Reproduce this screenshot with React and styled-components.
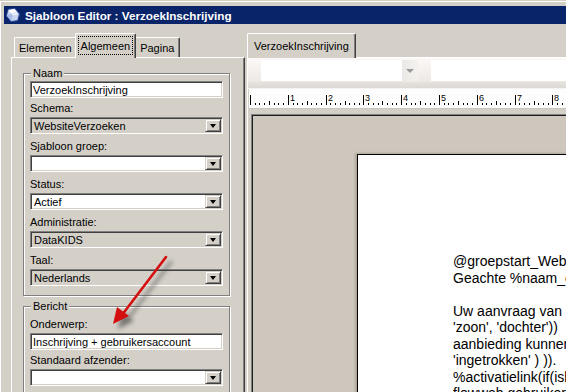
import React from 'react';
import styled, { createGlobalStyle } from 'styled-components';

const GlobalStyle = createGlobalStyle`
  html, body {
    margin: 0;
    padding: 0;
    background: #d4d0c8;
  }
  body {
    font-family: 'Liberation Sans', Arial, sans-serif;
    font-size: 11px;
    color: #000;
  }
`;

const Window = styled.div`
  position: relative;
  width: 566px;
  height: 392px;
  overflow: hidden;
  box-sizing: border-box;
  background: #d4d0c8;
  border-top: 1px solid #d4d0c8;
  box-shadow: inset 1px 1px 0 #fff;
  padding: 5px 0 0 4px;
  display: flex;
  flex-direction: column;
`;

const TitleBar = styled.div`
  height: 18px;
  flex: none;
  background: #0a246a;
  display: flex;
  align-items: center;
  gap: 4px;
  padding-left: 1px;
  color: #fff;
  font-weight: bold;
  font-size: 11.7px;
  white-space: nowrap;
`;

const Body = styled.div`
  flex: 1;
  min-height: 0;
  display: flex;
  gap: 2px;
  padding: 9px 0 0 7px;
`;

const Pane = styled.div`
  display: flex;
  flex-direction: column;
  flex: none;
  width: ${({ $width }) => $width}px;
`;

const TabStrip = styled.div`
  height: 24px;
  display: flex;
  align-items: flex-end;
  padding-left: ${({ $inset }) => $inset}px;
  flex: none;
`;

const Tab = styled.div`
  position: relative;
  box-sizing: border-box;
  height: ${({ $active }) => ($active ? 25 : 20)}px;
  margin: 0 ${({ $active, $edge }) => ($active && !$edge ? -2 : 0)}px
    ${({ $active }) => ($active ? -1 : 0)}px;
  z-index: ${({ $active }) => ($active ? 2 : 1)};
  padding: ${({ $active }) => ($active ? '2px 2px 0' : '0')};
  display: flex;
  align-items: ${({ $active }) => ($active ? 'flex-start' : 'center')};
  background: #d4d0c8;
  border-top: 1px solid #fff;
  border-left: 1px solid #fff;
  border-right: 1px solid #404040;
  border-radius: 2px 2px 0 0;
  box-shadow: inset -1px 0 0 #808080;
  white-space: nowrap;
`;

const TabText = styled.span`
  box-sizing: border-box;
  height: 19px;
  display: flex;
  align-items: center;
  padding: 0 ${({ $pad }) => $pad}px;
  border: 1px ${({ $focus }) => ($focus ? 'dotted #000' : 'solid transparent')};
`;

const TabPanel = styled.div`
  flex: 1;
  box-sizing: border-box;
  background: #d4d0c8;
  border-top: 1px solid #fff;
  border-left: 1px solid #fff;
  border-right: 1px solid #404040;
  box-shadow: inset -1px 0 0 #808080;
  padding: 15px 14px 0 11px;
  display: flex;
  flex-direction: column;
`;

const Group = styled.div`
  position: relative;
  border: 1px solid #808080;
  box-shadow: inset 1px 1px 0 #fff, 1px 1px 0 #fff;
  padding: 7px 6px 7px 6px;
  margin-top: ${({ $gap }) => $gap || 0}px;
  display: flex;
  flex-direction: column;
`;

const Legend = styled.span`
  position: absolute;
  top: -7px;
  left: 7px;
  line-height: 13px;
  padding: 0 2px;
  background: #d4d0c8;
`;

const FieldLabel = styled.div`
  height: 19px;
  display: flex;
  align-items: center;
  white-space: nowrap;
`;

const sunken = `
  box-sizing: border-box;
  height: 17px;
  border-top: 1px solid #808080;
  border-left: 1px solid #808080;
  border-right: 1px solid #fff;
  border-bottom: 1px solid #fff;
  box-shadow: inset 1px 1px 0 #404040, inset -1px -1px 0 #d4d0c8;
`;

const TextBox = styled.div`
  ${sunken}
  background: #fff;
  padding: 0 2px;
  display: flex;
  align-items: center;
  white-space: nowrap;
`;

const Combo = styled.div`
  ${sunken}
  background: ${({ $readOnly }) => ($readOnly ? '#d4d0c8' : '#fff')};
  margin-bottom: 2px;
  padding: 2px 2px 2px 3px;
  display: flex;
  align-items: center;
  justify-content: space-between;
  white-space: nowrap;
`;

const DropButton = styled.span`
  box-sizing: border-box;
  width: 16px;
  height: 13px;
  flex: none;
  background: #d4d0c8;
  border-top: 1px solid #d4d0c8;
  border-left: 1px solid #d4d0c8;
  border-right: 1px solid #404040;
  border-bottom: 1px solid #404040;
  box-shadow: inset 1px 1px 0 #fff, inset -1px -1px 0 #808080;
  display: flex;
  align-items: center;
  justify-content: center;
  margin-right: -1px;

  &::after {
    content: '';
    border-left: 3.5px solid transparent;
    border-right: 3.5px solid transparent;
    border-top: 4px solid #000;
    margin-top: 1px;
  }
`;

const EditorPanel = styled.div`
  flex: 1;
  box-sizing: border-box;
  border-top: 1px solid #fff;
  border-left: 1px solid #fff;
  background: #d4d0c8;
  display: flex;
  flex-direction: column;
`;

const Toolbar = styled.div`
  height: 24px;
  flex: none;
  box-sizing: border-box;
  padding: 2px 0 1px 13px;
  display: flex;
  gap: 13px;
  background: linear-gradient(#fbf8f7, #ece9e5);
`;

const ToolCombo = styled.div`
  width: 157px;
  display: flex;
  background: #fff;
`;

const ToolField = styled.div`
  flex: 1;
  background: #fff;
`;

const ToolArrow = styled.span`
  margin-left: auto;
  width: 16px;
  background: linear-gradient(90deg, #ebe9e6, #f4f2ef);
  display: flex;
  align-items: center;
  justify-content: center;

  &::after {
    content: '';
    border-left: 4px solid transparent;
    border-right: 4px solid transparent;
    border-top: 4px solid #9a9a9a;
  }
`;

const Separator = styled.div`
  height: 6px;
  flex: none;
  background: linear-gradient(#e6e3df, #dcd9d4);
  border-bottom: 1px solid #f4f3f1;
`;

const RulerBar = styled.div`
  height: 19px;
  flex: none;
  margin-left: 1px;
  background: #fdfdfd;
  border-bottom: 1px solid #c8c5bf;

  svg {
    display: block;
  }
`;

const Canvas = styled.div`
  flex: 1;
  margin: 5px 0 0 3px;
  border-top: 1px solid #808080;
  border-left: 1px solid #808080;
  box-shadow: inset 1px 1px 0 #202020;
  background: #cec7bd;
  padding: 39px 0 0 105px;
  display: flex;
`;

const Page = styled.div`
  flex: 1;
  background: #fff;
  border-top: 1px solid #000;
  border-left: 1px solid #000;
  box-shadow: -2px -1px 2px rgba(110, 100, 85, 0.35);
  padding: 98px 0 0 95px;
  font-size: 14px;
  line-height: 16.5px;
  white-space: pre;
  overflow: hidden;
`;

const Arrow = styled.svg`
  position: absolute;
  left: 100px;
  top: 245px;
  overflow: visible;
  filter: drop-shadow(5px 5px 2px rgba(60, 60, 60, 0.6));
`;

function AppIcon() {
  return (
    <svg width="16" height="16" viewBox="0 0 16 16">
      <path d="M3 2 L10 1 L15 7 L13 14 L6 15 L1 9 Z" fill="#3a5aa8" />
      <path d="M3.5 3 L9.5 2 L13.8 7.2 L12.2 13 L6.3 14 L2 8.8 Z" fill="#c9d6f2" />
      <path d="M3.5 3 L9.5 2 L12 5 L5.8 6.2 Z" fill="#fff" />
      <path d="M5.8 6.2 L12 5 L13.8 7.2 L7.8 8.6 Z" fill="#e8eefc" />
      <path d="M2 8.8 L5.8 6.2 L7.8 8.6 L6.3 14 Z" fill="#a9bce6" />
    </svg>
  );
}

function Ruler() {
  const unit = 37.8;
  const marks = [];
  for (let i = 0; i <= 8 * 8 + 2; i++) {
    const x = Math.round(1 + (i * unit) / 8) + 0.5;
    const major = i % 8 === 0;
    const mid = i % 8 === 4;
    const y1 = major ? 6 : mid ? 12 : 14;
    marks.push(<line key={`t${i}`} x1={x} x2={x} y1={y1} y2={16} stroke="#000" strokeWidth="1" />);
    if (major && i > 0) {
      marks.push(
        <text key={`n${i}`} x={x + 1.5} y={12} fontSize="9" fontFamily="Liberation Sans, Arial, sans-serif" fill="#000">
          {i / 8}
        </text>
      );
    }
  }
  return (
    <svg width="320" height="19">
      {marks}
    </svg>
  );
}

function Field({ label, value, readOnly }) {
  return (
    <>
      <FieldLabel>{label}</FieldLabel>
      <Combo $readOnly={readOnly}>
        <span>{value}</span>
        <DropButton />
      </Combo>
    </>
  );
}

const letter = [
  '@groepstart_WebsiteVerzoeken',
  'Geachte %naam_ouder%,',
  '',
  'Uw aanvraag van uw %if(geslacht=\'M\',',
  "'zoon', 'dochter'))",
  'aanbieding kunnen wij hierbij %if(status,',
  "'ingetrokken' ) )).",
  '%activatielink(if(isleeg(account),',
  'flowweb gebruikersaccount',
];

export default function App() {
  return (
    <Window>
      <GlobalStyle />
      <TitleBar>
        <AppIcon />
        <span>Sjabloon Editor : VerzoekInschrijving</span>
      </TitleBar>
      <Body>
        <Pane $width={234}>
          <TabStrip $inset={3}>
            <Tab>
              <TabText $pad={3}>Elementen</TabText>
            </Tab>
            <Tab $active>
              <TabText $focus $pad={2}>Algemeen</TabText>
            </Tab>
            <Tab>
              <TabText $pad={4}>Pagina</TabText>
            </Tab>
          </TabStrip>
          <TabPanel>
            <Group>
              <Legend>Naam</Legend>
              <TextBox>VerzoekInschrijving</TextBox>
              <Field label="Schema:" value="WebsiteVerzoeken" readOnly />
              <Field label="Sjabloon groep:" value="" />
              <Field label="Status:" value="Actief" />
              <Field label="Administratie:" value="DataKIDS" readOnly />
              <Field label="Taal:" value="Nederlands" readOnly />
            </Group>
            <Group $gap={10}>
              <Legend>Bericht</Legend>
              <FieldLabel>Onderwerp:</FieldLabel>
              <TextBox>Inschrijving + gebruikersaccount</TextBox>
              <Field label="Standaard afzender:" value="" />
            </Group>
          </TabPanel>
        </Pane>
        <Pane $width={330}>
          <TabStrip $inset={0}>
            <Tab $active $edge>
              <TabText $pad={3}>VerzoekInschrijving</TabText>
            </Tab>
          </TabStrip>
          <EditorPanel>
            <Toolbar>
              <ToolCombo>
                <ToolArrow />
              </ToolCombo>
              <ToolField />
            </Toolbar>
            <Separator />
            <RulerBar>
              <Ruler />
            </RulerBar>
            <Canvas>
              <Page>{letter.join('\n')}</Page>
            </Canvas>
          </EditorPanel>
        </Pane>
      </Body>
      <Arrow width="70" height="85" viewBox="0 0 70 85">
        <line x1="66" y1="11" x2="22" y2="69" stroke="#d40f0f" strokeWidth="2.6" strokeLinecap="round" />
        <path d="M13 78 L17 61 L29 70 Z" fill="#d40f0f" />
      </Arrow>
    </Window>
  );
}
